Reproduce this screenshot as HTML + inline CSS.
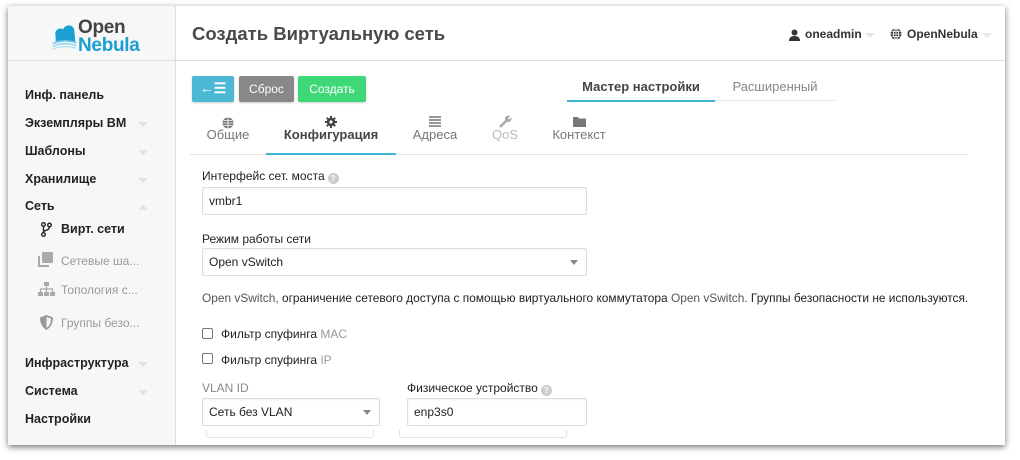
<!DOCTYPE html>
<html><head><meta charset="utf-8"><style>
*{box-sizing:border-box;margin:0;padding:0}
body{width:1020px;height:460px;background:#fff;font-family:"Liberation Sans",sans-serif;position:relative;overflow:hidden;color:#222}
.a{position:absolute;white-space:nowrap}
#frame{position:absolute;left:8px;top:6px;width:997px;height:439px;background:#fff;box-shadow:0 2px 6px rgba(0,0,0,.55);overflow:hidden}
#side{position:absolute;left:0;top:0;width:168px;height:439px;background:#f7f7f7;border-right:1px solid #ddd}
.hl{position:absolute;left:0;top:54px;width:997px;height:1px;background:#ddd}
.nav{font-size:12.5px;font-weight:bold;color:#222;left:17px}
.car{position:absolute;left:130px;width:0;height:0;border-left:5px solid transparent;border-right:5px solid transparent;border-top:5px solid #e2e2e2}
.sub{font-size:12px;color:#999;left:53px}
.btn{position:absolute;top:70px;height:26px;border-radius:2px;color:#fff;font-size:12px;text-align:center;line-height:26px;box-shadow:0 1px 2px rgba(0,0,0,.2)}
.tab{font-size:13px;color:#777;text-align:center}
.lbl{font-size:12px;color:#222}
.inp{position:absolute;height:28px;border:1px solid #ddd;border-radius:2px;background:#fff;font-size:12px;line-height:26px;padding-left:6px;color:#222;box-shadow:inset 0 1px 2px rgba(0,0,0,.05)}
.dd{position:absolute;right:8px;top:11px;width:0;height:0;border-left:4px solid transparent;border-right:4px solid transparent;border-top:5px solid #888}
.q{display:inline-block;width:11px;height:11px;border-radius:50%;background:#ccc;color:#fff;font-size:8px;line-height:11px;text-align:center;font-weight:bold;vertical-align:-1px;margin-left:3px}
.cb{position:absolute;width:11px;height:11px;border:1px solid #777;border-radius:2px;background:#fff}
</style></head><body>
<div id="frame">
<div id="side"></div>
<div class="hl"></div>
<!-- logo -->
<svg class="a" style="left:42px;top:14px" width="30" height="32" viewBox="0 0 32 32">
<path d="M6 16 C4 10 10 6 14 9 C16 3 26 3 26 11 L27 22 C20 20 12 20 6 22 Z" fill="#1b9fd1"/>
<path d="M3 24 Q15 19 28 23" stroke="#6cc3e8" stroke-width="1.5" fill="none"/>
<path d="M3 27 Q15 22 28 26" stroke="#8fd2ef" stroke-width="1.5" fill="none"/>
<path d="M3 30 Q15 25 28 29" stroke="#b4e1f4" stroke-width="1.5" fill="none"/>
</svg>
<div class="a" style="left:70px;top:12px;font-size:19px;color:#444;line-height:20px;font-weight:bold;letter-spacing:-.3px">Open</div>
<div class="a" style="left:70px;top:30px;font-size:19px;color:#1b9fd1;line-height:20px;font-weight:bold;letter-spacing:-.3px">Nebula</div>
<div class="a" style="left:184px;top:17px;font-size:18.5px;font-weight:bold;color:#4a4a4a">Создать Виртуальную сеть</div>
<svg class="a" style="left:781px;top:23px" width="11" height="12" viewBox="0 0 11 12"><circle cx="5.5" cy="3.5" r="3" fill="#333"/><path d="M0 12 Q0 7 5.5 7 Q11 7 11 12Z" fill="#333"/></svg>
<div class="a" style="left:797px;top:21px;font-size:12px;font-weight:bold;color:#333">oneadmin</div>
<div class="car" style="left:857px;top:27px;border-top-color:#e6e6e6"></div>
<svg class="a" style="left:882px;top:22px" width="12" height="12" viewBox="0 0 12 12"><circle cx="6" cy="6" r="5.5" fill="#333"/><path d="M0.5 6H11.5M6 .5V11.5M1.5 3.5H10.5M1.5 8.5H10.5" stroke="#fff" stroke-width=".8"/><ellipse cx="6" cy="6" rx="2.5" ry="5.5" fill="none" stroke="#fff" stroke-width=".8"/></svg>
<div class="a" style="left:899px;top:21px;font-size:12px;font-weight:bold;color:#333">OpenNebula</div>
<div class="car" style="left:974px;top:27px;border-top-color:#e6e6e6"></div>
<!-- nav -->
<div class="a nav" style="top:82px">Инф. панель</div>
<div class="a nav" style="top:110px">Экземпляры ВМ</div><div class="car" style="top:116px"></div>
<div class="a nav" style="top:138px">Шаблоны</div><div class="car" style="top:144px"></div>
<div class="a nav" style="top:166px">Хранилище</div><div class="car" style="top:172px"></div>
<div class="a nav" style="top:193px">Сеть</div><div class="car" style="top:199px;border-top:none;border-bottom:5px solid #e2e2e2"></div>
<svg class="a" style="left:33px;top:216px" width="11" height="15" viewBox="0 0 11 15"><circle cx="2.5" cy="2.5" r="1.8" fill="none" stroke="#222" stroke-width="1.4"/><circle cx="2.5" cy="12.5" r="1.8" fill="none" stroke="#222" stroke-width="1.4"/><circle cx="8.5" cy="3" r="1.8" fill="none" stroke="#222" stroke-width="1.4"/><path d="M2.5 4.3V10.7M8.5 4.8Q8.5 8 3 9" stroke="#222" stroke-width="1.4" fill="none"/></svg>
<div class="a" style="left:53px;top:216px;font-size:12.5px;font-weight:bold;color:#222">Вирт. сети</div>
<svg class="a" style="left:30px;top:246px" width="16" height="15" viewBox="0 0 16 15"><rect x="4" y="0" width="11" height="11" fill="#aaa" rx="1"/><path d="M1 4V14H11" stroke="#aaa" stroke-width="2" fill="none"/></svg>
<div class="a sub" style="top:248px">Сетевые ша...</div>
<svg class="a" style="left:30px;top:276px" width="17" height="15" viewBox="0 0 17 15"><rect x="6" y="0" width="5" height="4" fill="#aaa"/><path d="M8.5 4V7M2.5 10V7H14.5V10M8.5 7V10" stroke="#aaa" stroke-width="1.2" fill="none"/><rect x="0" y="10" width="5" height="4" fill="#aaa"/><rect x="6" y="10" width="5" height="4" fill="#aaa"/><rect x="12" y="10" width="5" height="4" fill="#aaa"/></svg>
<div class="a sub" style="top:277px">Топология с...</div>
<svg class="a" style="left:32px;top:309px" width="13" height="15" viewBox="0 0 13 15"><path d="M6.5 0L13 2.5Q13 11 6.5 15Q0 11 0 2.5Z" fill="#999"/><path d="M6.5 2L11 3.8Q11 10 6.5 13Z" fill="#f7f7f7"/></svg>
<div class="a sub" style="top:310px">Группы безо...</div>
<div class="a nav" style="top:350px">Инфраструктура</div><div class="car" style="top:356px"></div>
<div class="a nav" style="top:378px">Система</div><div class="car" style="top:384px"></div>
<div class="a nav" style="top:406px">Настройки</div>
<!-- buttons -->
<div class="btn" style="left:184px;width:42px;background:#4db8d6;font-size:14px;line-height:25px;font-weight:bold">&#8592;&#9776;</div>
<div class="btn" style="left:231px;width:55px;background:#888">Сброс</div>
<div class="btn" style="left:290px;width:68px;background:#3fd878">Создать</div>
<div class="a" style="left:559px;top:73px;width:148px;text-align:center;font-size:13px;font-weight:bold;color:#444">Мастер настройки</div>
<div class="a" style="left:707px;top:73px;width:120px;text-align:center;font-size:13px;color:#888">Расширенный</div>
<div class="a" style="left:559px;top:94px;width:148px;height:1.5px;background:#3db3d3"></div>
<div class="a" style="left:707px;top:94px;width:120px;height:1px;background:#e3e3e3"></div>
<!-- sub tabs -->
<div class="a" style="left:182px;top:148px;width:778px;height:1px;background:#e3e3e3"></div>
<div class="a" style="left:258px;top:147px;width:130px;height:2px;background:#3db3d3"></div>
<svg class="a" style="left:214px;top:111px" width="12" height="12" viewBox="0 0 12 12"><circle cx="6" cy="6" r="5.5" fill="#777"/><path d="M0.5 6H11.5M6 .5V11.5M1.5 3.5H10.5M1.5 8.5H10.5" stroke="#fff" stroke-width=".8"/></svg>
<div class="a tab" style="left:180px;top:121px;width:80px">Общие</div>
<svg class="a" style="left:317px;top:110px" width="12" height="12" viewBox="0 0 12 12"><circle cx="6" cy="6" r="4.2" fill="#444"/><path d="M6 0V12M0 6H12M1.8 1.8L10.2 10.2M10.2 1.8L1.8 10.2" stroke="#444" stroke-width="2"/><circle cx="6" cy="6" r="1.6" fill="#fff"/></svg>
<div class="a tab" style="left:258px;top:121px;width:130px;font-weight:bold;color:#444">Конфигурация</div>
<svg class="a" style="left:421px;top:110px" width="12" height="11" viewBox="0 0 12 11"><path d="M0 1H12M0 4H12M0 7H12M0 10H12" stroke="#777" stroke-width="1.5"/></svg>
<div class="a tab" style="left:387px;top:121px;width:80px">Адреса</div>
<svg class="a" style="left:491px;top:109px" width="13" height="13" viewBox="0 0 13 13"><path d="M1 12L7 6" stroke="#aaa" stroke-width="2.5"/><path d="M6 5A3.5 3.5 0 0 1 11 1L9 3.5 10 4.5 12.3 2.5A3.5 3.5 0 0 1 8 7Z" fill="#aaa"/></svg>
<div class="a tab" style="left:467px;top:121px;width:60px;color:#bbb">QoS</div>
<svg class="a" style="left:565px;top:111px" width="13" height="10" viewBox="0 0 13 10"><path d="M0 0H5L6 1.5H13V10H0Z" fill="#777"/></svg>
<div class="a tab" style="left:531px;top:121px;width:80px">Контекст</div>
<!-- form -->
<div class="a lbl" style="left:194px;top:163px">Интерфейс сет. моста<span class="q">?</span></div>
<div class="inp" style="left:194px;top:181px;width:385px">vmbr1</div>
<div class="a lbl" style="left:194px;top:226px">Режим работы сети</div>
<div class="inp" style="left:194px;top:242px;width:385px">Open vSwitch<div class="dd"></div></div>
<div class="a" style="left:194px;top:285px;font-size:11.9px;color:#222"><span style="color:#555">Open vSwitch,</span> ограничение сетевого доступа с помощью виртуального коммутатора <span style="color:#555">Open vSwitch.</span> Группы безопасности не используются.</div>
<div class="cb" style="left:194px;top:322px"></div>
<div class="a lbl" style="left:213px;top:321px">Фильтр спуфинга <span style="color:#999">MAC</span></div>
<div class="cb" style="left:194px;top:347px"></div>
<div class="a lbl" style="left:213px;top:347px">Фильтр спуфинга <span style="color:#999">IP</span></div>
<div class="a lbl" style="left:194px;top:375px;color:#888">VLAN ID</div>
<div class="inp" style="left:194px;top:392px;width:178px">Сеть без VLAN<div class="dd"></div></div>
<div class="a lbl" style="left:399px;top:375px">Физическое устройство<span class="q">?</span></div>
<div class="inp" style="left:399px;top:392px;width:180px">enp3s0</div>
<div class="a" style="left:198px;top:424px;width:168px;height:8px;border:1px solid #e3e3e3;border-top:none;border-radius:0 0 3px 3px"></div>
<div class="a" style="left:391px;top:424px;width:168px;height:8px;border:1px solid #e3e3e3;border-top:none;border-radius:0 0 3px 3px"></div>
</div>
</body></html>
